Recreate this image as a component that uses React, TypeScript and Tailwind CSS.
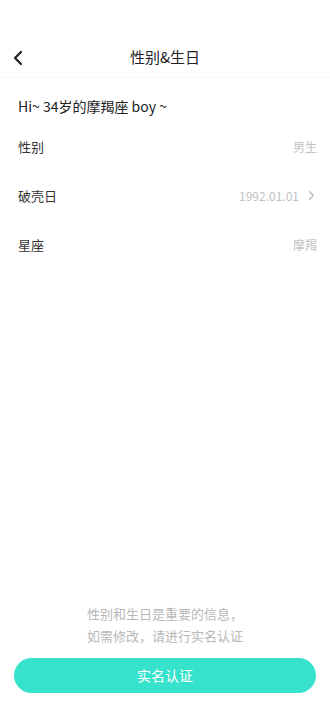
import { ChevronLeft, ChevronRight } from 'lucide-react'

const font = { fontFamily: '"Noto Sans CJK SC", "Noto Sans", sans-serif' }

function Row({ label, value, arrow }: { label: string; value: string; arrow?: boolean }) {
    return (
        <div className="flex h-[49px] items-center justify-between pl-[18px] pr-[13px]">
            <span className="text-[13px] text-[#333333]">{label}</span>
            <div className="flex items-center gap-[5px]">
                <span className="text-[12px] text-[#c2c2c2]">{value}</span>
                {arrow && <ChevronRight className="-mr-[2px] h-[15px] w-[15px] text-[#b8b8b8]" strokeWidth={2} />}
            </div>
        </div>
    )
}

export default function App() {
    return (
        <div className="flex h-[727px] w-[330px] flex-col bg-white" style={font}>
            <div className="h-[38px]" />
            <div className="relative flex h-[40px] items-center justify-center border-b border-[#f6f6f6]">
                <button className="absolute left-[6px] top-[8px] text-[#222]">
                    <ChevronLeft className="h-[24px] w-[24px]" strokeWidth={2.3} />
                </button>
                <h1 className="text-[15px] text-[#222]">性别&amp;生日</h1>
            </div>
            <div className="px-[18px] pt-[17px] text-[14px] leading-[22px] text-[#222]">Hi~ 34岁的摩羯座 boy ~</div>
            <div className="mt-[5px]">
                <Row label="性别" value="男生" />
                <Row label="破壳日" value="1992.01.01" arrow />
                <Row label="星座" value="摩羯" />
            </div>
            <div className="flex-1" />
            <div className="flex flex-col items-center text-[13px] leading-[22px] text-[#b8b8b8]">
                <p>性别和生日是重要的信息，</p>
                <p>如需修改，请进行实名认证</p>
            </div>
            <div className="px-[14px] pt-[11px] pb-[34px]">
                <button className="flex h-[35px] w-full items-center justify-center rounded-full bg-[#36e2cb] text-[14px] text-white">
                    实名认证
                </button>
            </div>
        </div>
    )
}
